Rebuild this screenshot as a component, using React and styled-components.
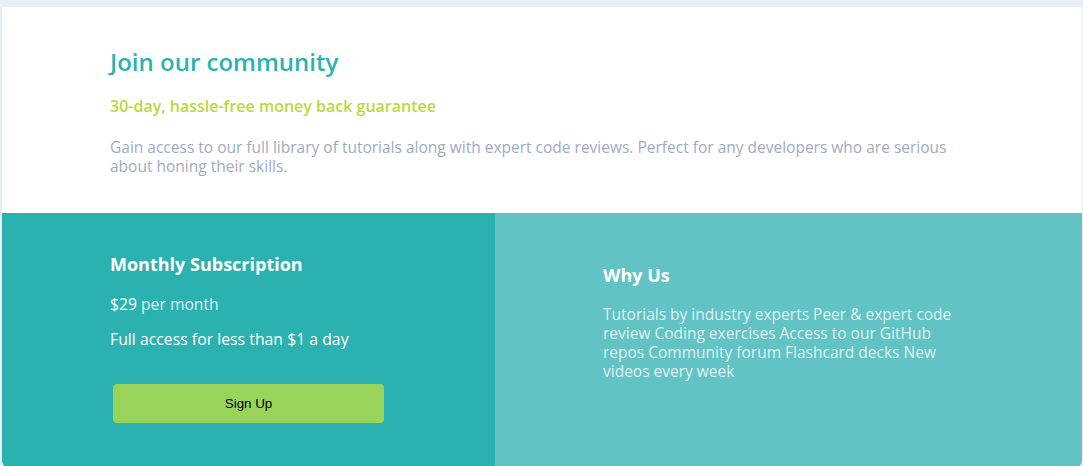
import React from "react";
import styled, { createGlobalStyle } from "styled-components";

const Global = createGlobalStyle`
  html, body { margin: 0; padding: 0; }
  body {
    background: #e6eef6;
    font-family: "Open Sans", "Liberation Sans", sans-serif;
  }
`;

const Page = styled.div`
  padding: 7px 1px 0 2px;
`;

const Card = styled.main`
  background: #ffffff;
  border-radius: 0 0 6px 6px;
  overflow: hidden;
  display: flex;
  flex-direction: column;
`;

const Intro = styled.section`
  padding: 40px 108px 37px 108px;
  display: flex;
  flex-direction: column;
`;

const Title = styled.h1`
  margin: 0;
  font-size: 24px;
  line-height: 30px;
  font-weight: 600;
  color: #2bb3b1;
`;

const Guarantee = styled.h2`
  margin: 19px 0 0;
  font-size: 16px;
  line-height: 20px;
  font-weight: 600;
  color: #bcd83b;
`;

const Lead = styled.p`
  margin: 22px 0 0;
  max-width: 860px;
  font-size: 15.5px;
  line-height: 19px;
  color: #a0abc0;
`;

const Split = styled.div`
  display: grid;
  grid-template-columns: 493px 1fr;
  height: 254px;
`;

const Panel = styled.section`
  background: ${(p) => p.$bg};
  color: #ffffff;
  padding: ${(p) => p.$pad};
  display: flex;
  flex-direction: column;
`;

const PanelTitle = styled.h3`
  margin: 0;
  font-size: 18px;
  line-height: 24px;
  font-weight: 700;
`;

const Price = styled.p`
  margin: 18px 0 0;
  font-size: 15.7px;
  line-height: 20px;
  color: rgba(255, 255, 255, 0.85);
  strong {
    color: #fff;
    font-weight: 400;
  }
`;

const Access = styled.p`
  margin: 15px 0 0;
  font-size: 15.8px;
  line-height: 20px;
`;

const SignUp = styled.button`
  margin: 35px 0 0 3px;
  width: 271px;
  height: 39px;
  border: none;
  border-radius: 4px;
  background: #98d45a;
  color: #000;
  font-family: "Liberation Sans", Arial, sans-serif;
  font-size: 13.333px;
  cursor: pointer;
`;

const Features = styled.p`
  margin: 18px 0 0;
  max-width: 360px;
  font-size: 15.5px;
  line-height: 19px;
  color: rgba(255, 255, 255, 0.8);
`;

export default function App() {
  return (
    <>
      <Global />
      <Page>
        <Card>
          <Intro>
            <Title>Join our community</Title>
            <Guarantee>30-day, hassle-free money back guarantee</Guarantee>
            <Lead>
              Gain access to our full library of tutorials along with expert code
              reviews. Perfect for any developers who are serious about honing
              their skills.
            </Lead>
          </Intro>
          <Split>
            <Panel $bg="#2bb2b0" $pad="39px 108px 0 108px">
              <PanelTitle>Monthly Subscription</PanelTitle>
              <Price>
                <strong>$29</strong> per month
              </Price>
              <Access>Full access for less than $1 a day</Access>
              <div>
                <SignUp>Sign Up</SignUp>
              </div>
            </Panel>
            <Panel $bg="#61c3c3" $pad="50px 108px 0 108px">
              <PanelTitle>Why Us</PanelTitle>
              <Features>
                Tutorials by industry experts Peer &amp; expert code review Coding
                exercises Access to our GitHub repos Community forum Flashcard
                decks New videos every week
              </Features>
            </Panel>
          </Split>
        </Card>
      </Page>
    </>
  );
}
